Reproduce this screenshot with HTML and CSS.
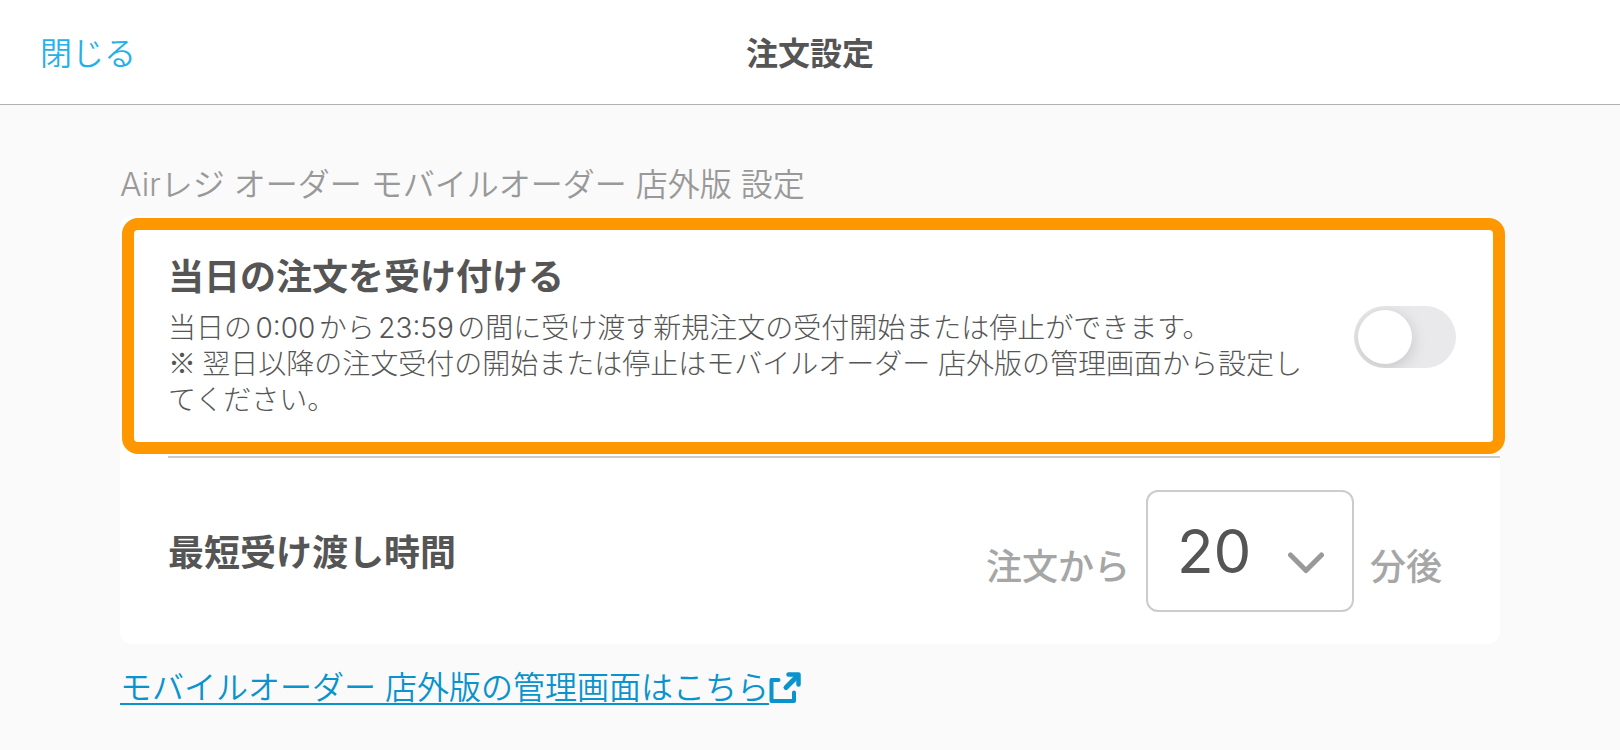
FILE: index.html
```html
<!DOCTYPE html>
<html lang="ja">
<head>
<meta charset="utf-8">
<meta name="viewport" content="width=device-width, initial-scale=1">
<title>注文設定</title>
<link rel="stylesheet" href="styles.css">
</head>
<body>
<header class="header">
  <button type="button" class="close">閉じる</button>
  <h1 class="header-title">注文設定</h1>
</header>
<main class="main">
  <h2 class="section-title">Airレジ オーダー モバイルオーダー 店外版 設定</h2>
  <section class="card">
    <div class="row row-accept">
      <div class="row-text">
        <label class="row-title" for="accept">当日の注文を受け付ける</label>
        <p class="description" id="accept-note">当日の0:00から23:59の間に受け渡す新規注文の受付開始または停止ができます。<br><span class="note-mark">※ </span>翌日以降の注文受付の開始または停止はモバイルオーダー 店外版の管理画面から設定してください。</p>
      </div>
      <input type="checkbox" role="switch" class="switch" id="accept" aria-describedby="accept-note">
    </div>
    <div class="row row-time">
      <label class="row-title" for="minutes">最短受け渡し時間</label>
      <div class="time">
        <span class="unit">注文から</span>
        <span class="select-wrap">
          <select class="select" id="minutes">
            <option>10</option>
            <option selected>20</option>
            <option>30</option>
          </select>
          <svg class="chevron" viewBox="0 0 36 22" aria-hidden="true"><path d="M2.5 3 L18 18.5 L33.5 3" fill="none" stroke="currentColor" stroke-width="5" stroke-linecap="round" stroke-linejoin="round"/></svg>
        </span>
        <span class="unit">分後</span>
      </div>
    </div>
  </section>
  <a class="admin-link" href="#"><span class="admin-link-text">モバイルオーダー 店外版の管理画面はこちら</span><svg class="external" viewBox="0 0 32 32" aria-hidden="true"><g fill="none" stroke="currentColor" stroke-width="4" stroke-linecap="round"><path d="M9.500 8H2.500V29H25V20.500" stroke-linejoin="round"/><path d="M17 15.500L28 4.500" stroke-width="5"/><path d="M19.500 2.500H29.500V12.500" stroke-linejoin="round" stroke-width="4.500"/></g></svg></a>
</main>
</body>
</html>
```
FILE: styles.css
```css
* {
  box-sizing: border-box;
}

body {
  margin: 0;
  background: #fafafa;
  color: #555;
  font-family: Inter, "Noto Sans CJK JP", sans-serif;
  font-size: 32px;
  font-weight: 350;
  line-height: 48px;
  text-autospace: normal;
}

.header {
  display: grid;
  grid-template-columns: 1fr auto 1fr;
  align-items: center;
  min-height: 105px;
  padding: 4px 40px 0;
  background: #fff;
  border-bottom: 1px solid #b0b0b0;
}

.close {
  justify-self: start;
  padding: 0;
  border: 0;
  background: none;
  color: #26b0ea;
  font: inherit;
  cursor: pointer;
}

.header-title {
  margin: 0;
  font-size: 32px;
  font-weight: 700;
}

.main {
  padding: 56px 120px 32px;
}

.section-title {
  margin: 0 0 7px;
  color: #999;
  font-size: 32px;
  font-weight: 350;
  text-autospace: no-autospace;
}

.card {
  border-radius: 12px;
  background: #fff;
}

.row {
  position: relative;
  display: flex;
  align-items: center;
  justify-content: space-between;
  padding: 32px 44px 32px 48px;
}

.row-accept {
  gap: 44px;
  padding: 33px 44px 31px 48px;
}

.row-accept::before {
  content: "";
  position: absolute;
  inset: 2px -5px;
  left: 2px;
  border: 12px solid #ff9800;
  border-radius: 16px;
  pointer-events: none;
}

.row-accept::after {
  content: "";
  position: absolute;
  right: 0;
  bottom: -2px;
  left: 48px;
  height: 2px;
  background: #ccc;
}

.row-time {
  padding: 34px 58px 32px 48px;
}

.row-title {
  display: block;
  font-size: 36px;
  font-weight: 700;
  line-height: 56px;
}

.row-time .row-title {
  padding-top: 4px;
}

.description {
  margin: 5px 0 7px;
  font-size: 28px;
  font-weight: 300;
  line-height: 36px;
}

.note-mark {
  font-family: "Noto Sans CJK JP", sans-serif;
  line-height: 24px;
}

.switch {
  appearance: none;
  flex: none;
  width: 102px;
  height: 62px;
  margin: 0;
  padding: 4px;
  overflow: hidden;
  border-radius: 31px;
  background: #e9e9eb;
  cursor: pointer;
}

.switch::before {
  content: "";
  display: block;
  width: 54px;
  height: 54px;
  border-radius: 50%;
  background: #fff;
  box-shadow: 0 4px 16px rgba(0, 0, 0, 0.16);
}

.switch:checked {
  background: #26b0ea;
}

.switch:checked::before {
  margin-left: auto;
}

.time {
  display: flex;
  align-items: center;
  gap: 16px;
}

.unit {
  padding-top: 32px;
  color: #a6a6a6;
  font-size: 36px;
  font-weight: 500;
}

.select-wrap {
  position: relative;
  display: block;
}

.select {
  appearance: none;
  display: block;
  width: 208px;
  height: 122px;
  padding: 0 72px 0 29px;
  border: 2px solid #ccc;
  border-radius: 12px;
  background: #fff;
  color: #555;
  font-family: Inter, sans-serif;
  font-size: 60px;
  font-weight: 400;
}

.chevron {
  position: absolute;
  right: 30px;
  bottom: 38px;
  width: 36px;
  height: 22px;
  color: #999;
  pointer-events: none;
}

.admin-link {
  display: inline-flex;
  align-items: center;
  margin-top: 20px;
  color: #0a93cc;
  text-decoration: none;
}

.admin-link-text {
  text-decoration: underline;
  text-decoration-thickness: 2px;
  text-decoration-skip-ink: none;
  text-underline-offset: 4px;
}

.external {
  flex: none;
  width: 32px;
  height: 32px;
}
```
